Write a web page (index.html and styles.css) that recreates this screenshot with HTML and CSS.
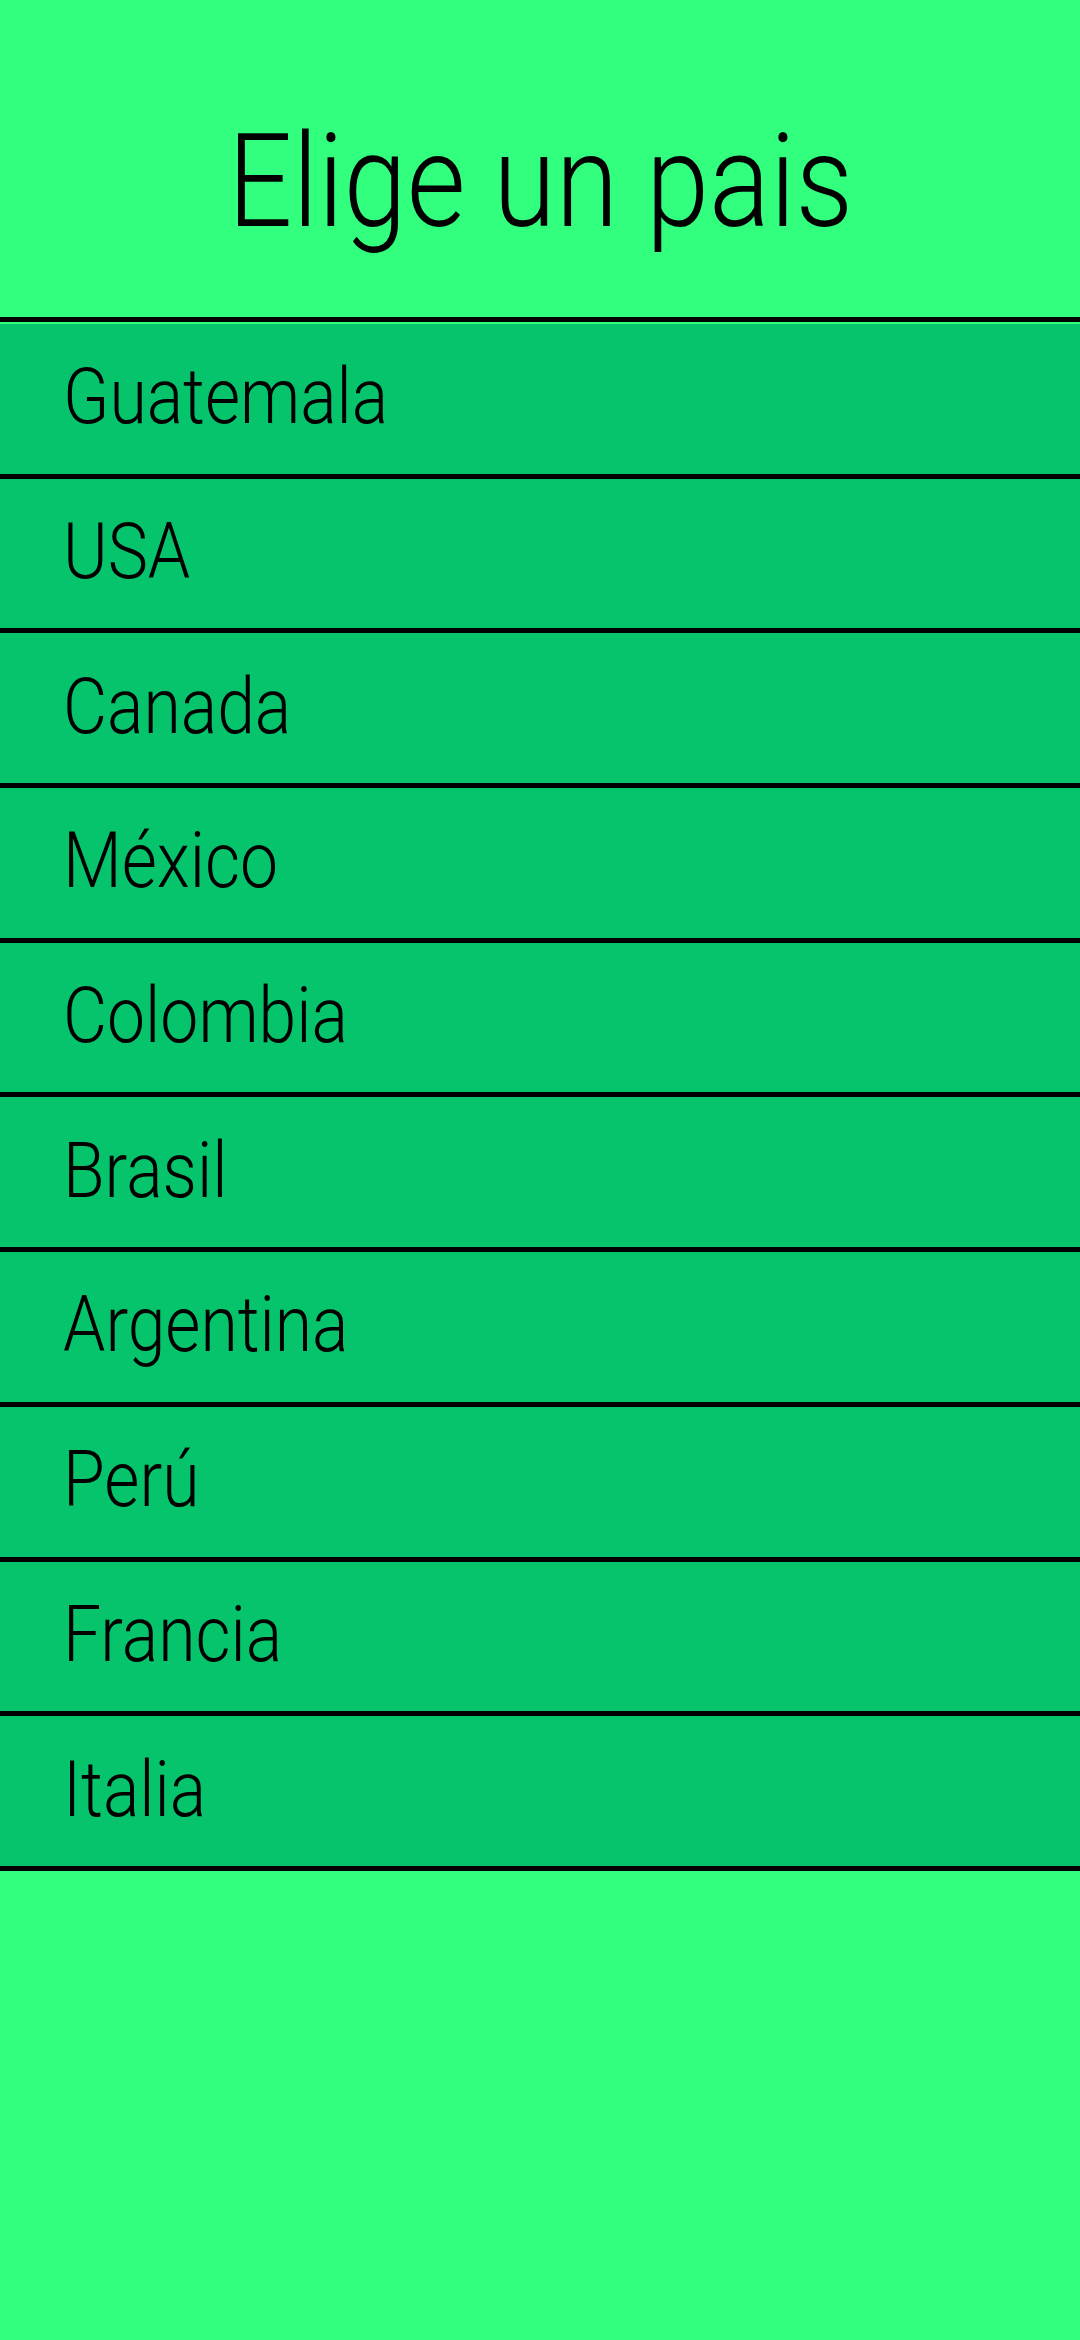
FILE: index.html
```html
<!DOCTYPE html>
<html lang="es">
<head>
<meta charset="utf-8">
<title>Elige un pais</title>
<link rel="stylesheet" href="styles.css">
</head>
<body>
<header class="header">
  <h1 class="title"><span class="title-text">Elige un pais</span></h1>
</header>
<ul class="list">
  <li class="row"><span class="label">Guatemala</span></li>
  <li class="row"><span class="label">USA</span></li>
  <li class="row"><span class="label">Canada</span></li>
  <li class="row"><span class="label">México</span></li>
  <li class="row"><span class="label">Colombia</span></li>
  <li class="row"><span class="label">Brasil</span></li>
  <li class="row"><span class="label">Argentina</span></li>
  <li class="row"><span class="label">Perú</span></li>
  <li class="row"><span class="label">Francia</span></li>
  <li class="row"><span class="label">Italia</span></li>
</ul>
</body>
</html>
```

FILE: styles.css
```css
html, body {
  margin: 0;
  padding: 0;
}
body {
  width: 1080px;
  min-height: 2340px;
  background: #32ff7e;
  font-family: Roboto, "Liberation Sans", sans-serif;
  font-weight: 350;
  color: #000;
}
.header {
  box-sizing: border-box;
  height: 322px;
  padding-top: 117px;
  border-bottom: 5px solid #000;
  text-align: center;
}
.title {
  margin: 0;
  font-size: 130px;
  font-weight: 330;
  line-height: 1;
}
.title-text {
  display: inline-block;
  transform: scaleX(0.875);
  transform-origin: center;
}
.list {
  list-style: none;
  margin: 2px 0 0 0;
  padding: 0;
}
.row {
  box-sizing: border-box;
  height: 154.7px;
  background: #05c46b;
  border-bottom: 5px solid #000;
  display: flex;
  align-items: center;
  padding-left: 63px;
}
.label {
  display: inline-block;
  font-size: 78px;
  line-height: 1;
  margin-top: -3px;
  transform: scaleX(0.87);
  transform-origin: left center;
}
```
